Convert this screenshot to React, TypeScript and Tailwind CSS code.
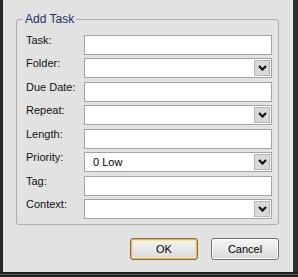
import React from "react";

const Chevron = () => (
  <svg width="9" height="6" viewBox="0 0 9 6">
    <path d="M1 1 L4.5 4.5 L8 1" stroke="#111" strokeWidth="2.2" fill="none" />
  </svg>
);

const TextBox = ({ value }: { value?: string }) => (
  <div className="h-[20px] w-[188px] border border-[#a3a3a3] bg-white flex items-center pl-[8px] text-[11px] leading-[13px] text-black">
    {value}
  </div>
);

const Combo = ({ value }: { value?: string }) => (
  <div className="h-[20px] w-[188px] border border-[#a3a3a3] bg-white flex items-center justify-between p-[1px]">
    <span className="pl-[7px] text-[11px] leading-[13px] text-black">{value}</span>
    <div className="h-[16px] w-[16px] border border-[#b5b5b5] bg-[#d9d9d9] flex items-center justify-center">
      <Chevron />
    </div>
  </div>
);

const rows: { label: string; kind: "text" | "combo"; value?: string }[] = [
  { label: "Task:", kind: "text" },
  { label: "Folder:", kind: "combo" },
  { label: "Due Date:", kind: "text" },
  { label: "Repeat:", kind: "combo" },
  { label: "Length:", kind: "text" },
  { label: "Priority:", kind: "combo", value: "0 Low" },
  { label: "Tag:", kind: "text" },
  { label: "Context:", kind: "combo" },
];

export default function App() {
  return (
    <div
      className="w-[298px] h-[277px] bg-[#2a2a2a] flex flex-col overflow-hidden"
      style={{ fontFamily: '"Liberation Sans", Arial, sans-serif' }}
    >
      <div className="flex flex-1">
        <div className="w-[3px] bg-[#262626]" />
        <div className="w-[290px] bg-[#e2e2e2] border-r border-[#f2f2f2] flex flex-col">
          <fieldset className="ml-[13px] mt-[13px] w-[263px] border border-[#adadad] rounded-[3px] pl-[9px] pr-[6px] pt-[9px] pb-[5px]">
            <legend className="-ml-[3px] px-[2px] text-[12px] leading-[13px] text-[#1d2f6b]">Add Task</legend>
            <div className="flex flex-col gap-[3.45px]">
              {rows.map((r) => (
                <div key={r.label} className="flex items-start h-[20px]">
                  <div className="w-[58px] text-[11px] leading-[13px] text-[#111] -mt-[1px]">{r.label}</div>
                  {r.kind === "text" ? <TextBox value={r.value} /> : <Combo value={r.value} />}
                </div>
              ))}
            </div>
          </fieldset>
          <div className="flex justify-end gap-[13px] pr-[13px] mt-[13px]">
            <button className="w-[68px] h-[22px] rounded-[3px] border border-[#707070] bg-gradient-to-b from-[#f6f6f6] to-[#d9d9d9] text-[11px] text-black shadow-[inset_0_0_0_1px_#f5b13a,inset_0_0_0_2px_#fde3a8]">
              OK
            </button>
            <button className="w-[68px] h-[22px] rounded-[3px] border border-[#707070] bg-gradient-to-b from-[#f6f6f6] to-[#d9d9d9] text-[11px] text-black shadow-[inset_0_0_0_1px_#fbfbfb]">
              Cancel
            </button>
          </div>
        </div>
        <div className="w-[5px] bg-[#2e2e2e]" />
      </div>
      <div className="h-[5px] bg-[#1f1f1f] flex flex-col">
        <div className="h-[2px]" />
        <div className="h-[1px] bg-[#5a5a5a]" />
      </div>
    </div>
  );
}
